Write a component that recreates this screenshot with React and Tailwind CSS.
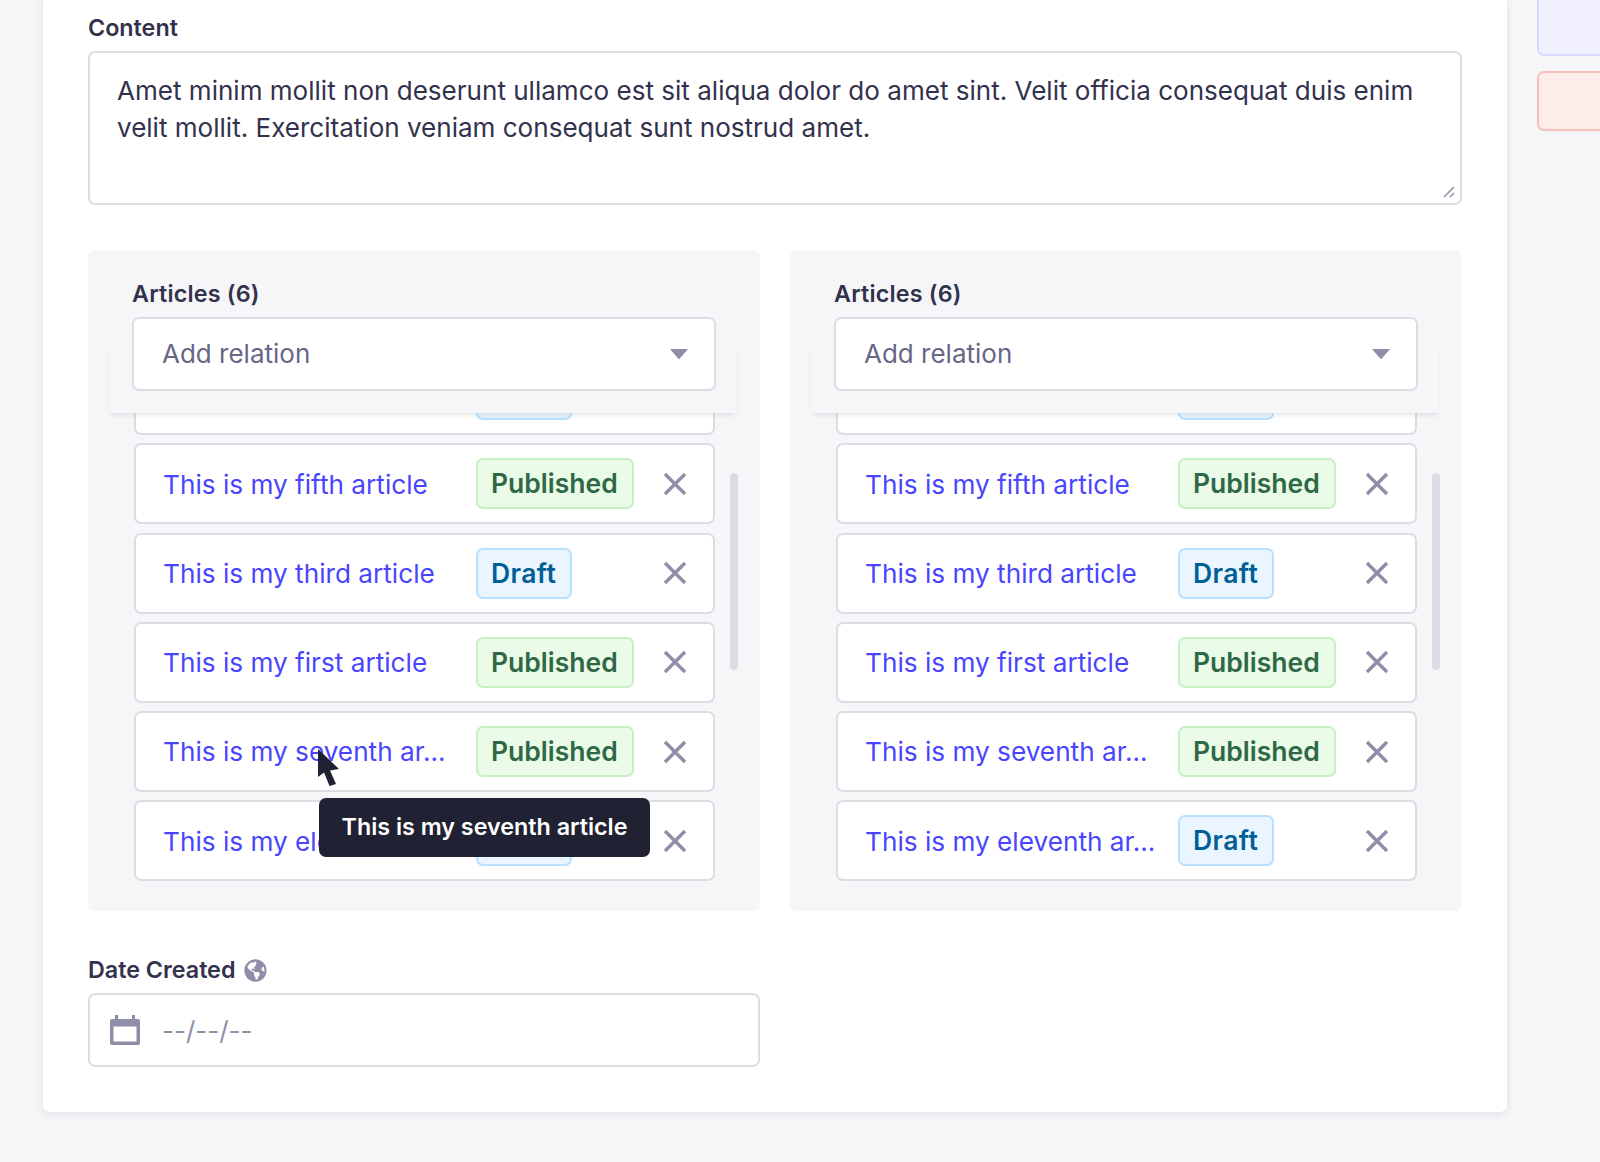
import { FaGlobeAmericas } from 'react-icons/fa';

const rows = [
  { title: 'This is my fifth article', status: 'Published' },
  { title: 'This is my third article', status: 'Draft' },
  { title: 'This is my first article', status: 'Published' },
  { title: 'This is my seventh ar...', status: 'Published' },
  { title: 'This is my eleventh ar...', status: 'Draft' },
];

function Badge({ status }) {
  const published = status === 'Published';
  return (
    <span
      className={`inline-flex h-[51px] items-center rounded-[7px] border-2 pl-[13px] pt-[1px] text-[26.5px] font-semibold ${
        published
          ? 'border-[#c6f0c2] bg-[#eafbe7] pr-[14px] text-[#2f6846]'
          : 'border-[#b8e1ff] bg-[#eaf5ff] pr-[14px] tracking-[0.4px] text-[#006096]'
      }`}
    >
      {status}
    </span>
  );
}

function Row({ title, status }) {
  return (
    <div className="flex h-[81px] w-[581px] shrink-0 items-center rounded-[7px] border-2 border-[#dcdce4] bg-white pl-[27px]">
      <div className="w-[313px] shrink-0 pt-[1px] text-[26.2px] text-[#4945ff]">{title}</div>
      <div className="w-[187px] shrink-0">
        <Badge status={status} />
      </div>
      <svg width="24" height="24" viewBox="0 0 24 24">
        <path d="M2 2 L22 22 M22 2 L2 22" stroke="#8e8ea9" strokeWidth="3.4" />
      </svg>
    </div>
  );
}

function RelationPanel({ hover }) {
  return (
    <div className="relative h-[661px] w-[672px] rounded-[7px] bg-[#f6f6f9] pl-[44px] pt-[29px]">
      <div className="absolute left-[21px] top-[93px] h-[70px] w-[628px] bg-[#f6f6f9] shadow-[0_4px_5px_-2px_rgba(33,33,52,0.1),0_-1px_2px_-1px_rgba(33,33,52,0.06)]" />
      <div className="relative text-[23.3px] leading-[30px] font-semibold tracking-[0.2px] text-[#32324d]">Articles (6)</div>
      <div className="relative mt-[8px] flex h-[74px] w-[584px] items-center justify-between rounded-[7px] border-2 border-[#dcdce4] bg-white pb-[1px] pl-[28px] pr-[26px]">
        <span className="text-[26px] text-[#666687]">Add relation</span>
        <svg width="18" height="10" viewBox="0 0 18 10">
          <path d="M0 0h18L9.8 9.4a1 1 0 0 1-1.6 0z" fill="#8e8ea9" />
        </svg>
      </div>
      <div className="mt-[22px] ml-[2px] flex h-[468px] w-[610px] flex-col gap-[8.25px] overflow-hidden">
        <div className="-mt-[59px]">
          <Row title="This is my ninth article" status="Draft" />
        </div>
        {rows.map((row) => (
          <Row key={row.title} title={row.title} status={row.status} />
        ))}
      </div>
      <div className="absolute left-[642px] top-[223px] h-[197px] w-[8px] rounded-full bg-[#dcdce4]" />
      {hover && (
        <>
          <div className="absolute left-[231px] top-[548px] flex h-[59px] w-[331px] items-center justify-center rounded-[7px] bg-[#212134] text-[23.3px] font-semibold text-white">
            This is my seventh article
          </div>
          <svg className="absolute left-[229px] top-[498px]" width="24" height="39" viewBox="0 0 24 39">
            <path d="M1 1 L22 21 L13 22.5 L19 36 L12.5 38 L7 24.5 L1 29 Z" fill="#212134" />
          </svg>
        </>
      )}
    </div>
  );
}

export default function App() {
  return (
    <div
      className="flex h-[1162px] w-[1600px] overflow-hidden bg-[#f6f6f9] pl-[43px] text-[#32324d]"
      style={{ fontFamily: 'Inter, sans-serif' }}
    >
      <div className="h-[1112px] w-[1464px] shrink-0 rounded-b-[7px] bg-white px-[45px] pt-[13px] shadow-[0_2px_8px_rgba(33,33,52,0.1)]">
        <div className="text-[23.3px] leading-[30px] font-semibold">Content</div>
        <div className="relative mt-[8px] h-[154px] w-[1374px] rounded-[7px] border-2 border-[#dcdce4] pl-[27px] pr-[28px] pt-[19px] text-[26.06px] leading-[37px]">
          Amet minim mollit non deserunt ullamco est sit aliqua dolor do amet sint. Velit officia consequat duis enim velit mollit. Exercitation veniam consequat sunt nostrud amet.
          <svg className="absolute bottom-[5px] right-[5px]" width="12" height="12" viewBox="0 0 12 12">
            <path d="M1 11 L11 1 M7 11 L11 7" stroke="#8e8ea9" strokeWidth="1.5" />
          </svg>
        </div>
        <div className="mt-[45px] flex gap-[30px]">
          <RelationPanel hover />
          <RelationPanel />
        </div>
        <div className="mt-[44px] flex items-center gap-[9px] text-[23.3px] leading-[30px] font-semibold">
          Date Created
          <FaGlobeAmericas size={23} className="text-[#8e8ea9]" />
        </div>
        <div className="mt-[8px] flex h-[74px] w-[672px] items-center rounded-[7px] border-2 border-[#dcdce4] pl-[20px]">
          <svg width="30" height="30" viewBox="0 0 30 30">
            <path
              fillRule="evenodd"
              d="M5 0h3v4h14V0h3v4h3a2 2 0 0 1 2 2v22a2 2 0 0 1-2 2H2a2 2 0 0 1-2-2V6a2 2 0 0 1 2-2h3zM3.5 11.5v15h23v-15z"
              fill="#8e8ea9"
            />
          </svg>
          <span className="ml-[22px] text-[26px] text-[#8e8ea9]">--/--/--</span>
        </div>
      </div>
      <div className="ml-[30px] flex w-[100px] shrink-0 flex-col gap-[15px]">
        <div className="-mt-[10px] h-[66px] rounded-[7px] border-2 border-[#d9d8ff] bg-[#f0f0ff]" />
        <div className="h-[60px] rounded-[7px] border-2 border-[#f5c0b8] bg-[#fcecea]" />
      </div>
    </div>
  );
}
